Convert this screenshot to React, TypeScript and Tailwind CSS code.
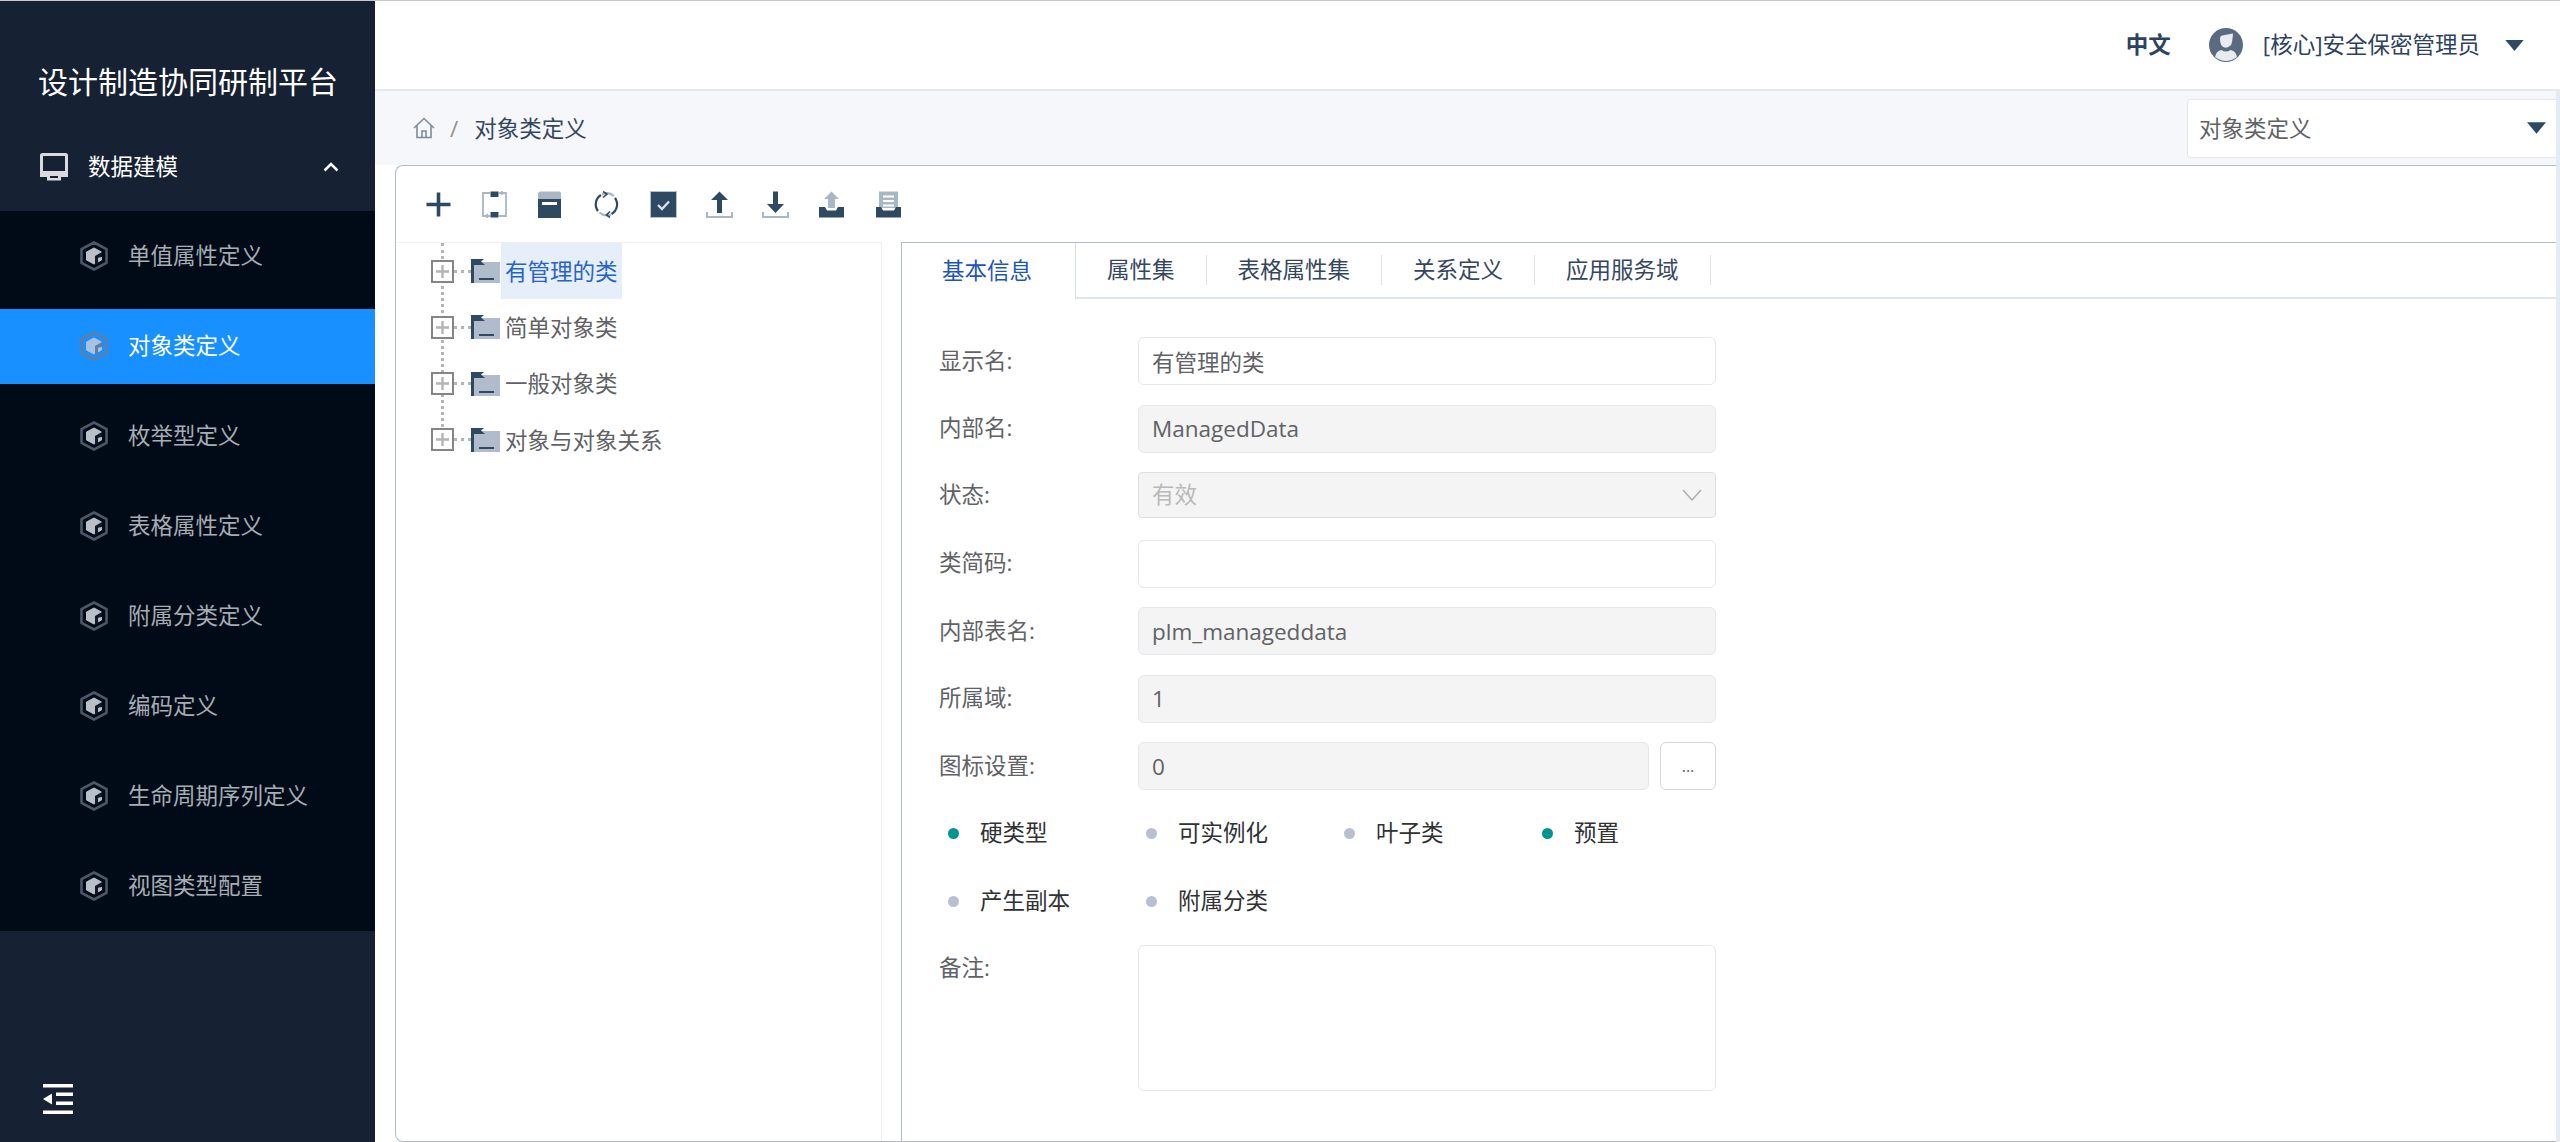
import React from "react";

const DARK = "#2d4a62";
const GRAY = "#a9b6c3";

const Hex = ({ active }: { active?: boolean }) => (
  <svg width="28" height="30" viewBox="0 0 28 30" className="shrink-0">
    <path d="M14 1.5 L26.5 8.2 V21.8 L14 28.5 L1.5 21.8 V8.2 Z" fill="none" stroke={active ? "#5f7ea3" : "#4a5868"} strokeWidth="2.6" strokeLinejoin="round" />
    <path d="M14 7 L21.5 11 V19 L14 23 L6.5 19 V11 Z" fill={active ? "#a9c2e0" : "#b9c0c8"} stroke={active ? "#a9c2e0" : "#b9c0c8"} strokeWidth="1" strokeLinejoin="round" />
    <path d="M22 11 L15 15 V24 L18 22.5 V17.5 Q18 16.5 19 16.5 L22 16 Z" fill={active ? "#5f7ea3" : "#10192a"} />
  </svg>
);

const Caret = ({ className }: { className: string }) => (
  <svg viewBox="0 0 20 12" className={className}>
    <path d="M0 0 H20 L10 12 Z" fill={DARK} />
  </svg>
);

const tools = [
  <path key="a" d="M13.5 1.5 V25.5 M1.5 13.5 H25.5" stroke={DARK} strokeWidth="3.6" fill="none" />,
  <g key="b">
    <path d="M9 2 H2 V25 H9 M18 2 H25 V25 H18" stroke={GRAY} strokeWidth="1.8" fill="none" />
    <path d="M20 0 L23 2 L20 4 M7 23 L4 25 L7 27" stroke={GRAY} strokeWidth="1.2" fill="none" />
    <rect x="9.5" y="0.5" width="8" height="5.5" fill={DARK} />
    <rect x="9.5" y="21" width="8" height="5.5" fill={DARK} />
  </g>,
  <g key="c">
    <path d="M1 3 Q1 0.5 3.5 0.5 H23 L24 2 V8 H1 Z" fill={GRAY} />
    <rect x="1" y="8" width="23" height="19" fill={DARK} />
    <rect x="5" y="11" width="15" height="3" fill="#ffffff" />
  </g>,
  <g key="d" fill="none" strokeWidth="2.2">
    <path d="M5 20 A11 11 0 0 1 8 4" stroke={DARK} />
    <path d="M9 3.5 A11 11 0 0 1 21 5" stroke={GRAY} />
    <path d="M22 7 A11 11 0 0 1 18.5 23" stroke={DARK} />
    <path d="M18 23.5 A11 11 0 0 1 6.5 21.5" stroke={GRAY} />
    <path d="M10 0.5 L14 3 L10 6.5 M17 20.5 L13.5 24 L17 26.5" stroke={DARK} strokeWidth="1.6" />
  </g>,
  <g key="e">
    <rect x="0.5" y="0.5" width="26" height="26" fill={DARK} stroke="#b4bfca" strokeWidth="1" />
    <path d="M8 14 L12 18 L19 10.5" stroke="#d9dfe5" strokeWidth="2.4" fill="none" />
  </g>,
  <g key="f">
    <path d="M1 21 V26 H26 V21" stroke={GRAY} strokeWidth="2" fill="none" />
    <path d="M13.5 0.5 L22 9 H16 V22 H11 V9 H5 Z" fill={DARK} />
  </g>,
  <g key="g">
    <path d="M1 21 V26 H26 V21" stroke={GRAY} strokeWidth="2" fill="none" />
    <path d="M13.5 22 L22 13 H16 V0.5 H11 V13 H5 Z" fill={DARK} />
  </g>,
  <g key="h">
    <path d="M13.5 0.5 L21 8 H17 V17 H10 V8 H6 Z" fill={GRAY} />
    <path d="M1 16 H7 L9 19.5 H18 L20 16 H26 V26.5 H1 Z" fill={DARK} />
  </g>,
  <g key="i">
    <path d="M4 0.5 H23 V17 H4 Z" fill={GRAY} />
    <rect x="8" y="4.5" width="11" height="2" fill="#fff" />
    <rect x="8" y="9" width="11" height="2" fill="#fff" />
    <rect x="8" y="13.5" width="11" height="2" fill="#fff" />
    <path d="M1 16 H6 L8 19.5 H19 L21 16 H26 V26.5 H1 Z" fill={DARK} />
  </g>,
];

const menu = ["单值属性定义", "对象类定义", "枚举型定义", "表格属性定义", "附属分类定义", "编码定义", "生命周期序列定义", "视图类型配置"];
const tree = ["有管理的类", "简单对象类", "一般对象类", "对象与对象关系"];
const tabs = ["属性集", "表格属性集", "关系定义", "应用服务域"];

const Label = ({ children }: { children: React.ReactNode }) => (
  <label className="block w-[199px] shrink-0 text-[#606266]">{children}</label>
);

const Field = ({ label, value, disabled }: { label: string; value: string; disabled?: boolean }) => (
  <div className="flex items-center h-[48px] mb-[19.5px]">
    <Label>{label}</Label>
    <input
      readOnly
      value={value}
      className={`w-[578px] h-[48px] px-[13px] rounded-[6px] border border-[#e4e7ed] text-[#606266] outline-none ${disabled ? "bg-[#f4f4f4]" : "bg-white"}`}
    />
  </div>
);

const Check = ({ label, on }: { label: string; on?: boolean }) => (
  <div className="flex items-center gap-[21px] h-[48px] text-[#303133]">
    <span className={`w-[11px] h-[11px] rounded-full ${on ? "bg-[#009490]" : "bg-[#b8c0d0]"}`} />
    <span>{label}</span>
  </div>
);

export default function App() {
  return (
    <div
      className="flex h-[1142px] w-full overflow-hidden border-t border-[#c8c8c8] bg-white text-[22.5px] leading-none"
      style={{ fontFamily: '"Open Sans", "Noto Sans CJK SC", sans-serif' }}
    >
      <aside className="w-[375px] shrink-0 flex flex-col bg-[#162133]">
        <div className="h-[120px] pt-[63px] pl-[38px] text-[30px] leading-[36px] text-white whitespace-nowrap">设计制造协同研制平台</div>
        <div className="h-[90px] flex items-center pl-[40px] pr-[36px] pt-[2px] text-white">
          <svg width="28" height="28" viewBox="0 0 28 28" className="mr-[20px]">
            <rect x="1.5" y="1.5" width="25" height="18" rx="1" fill="none" stroke="#d8dadd" strokeWidth="3" />
            <path d="M0 19 H28 V24 H21 V27.5 H7 V24 H0 Z" fill="#d8dadd" />
            <rect x="10" y="23" width="8" height="2" fill="#162133" />
          </svg>
          <span className="flex-1">数据建模</span>
          <svg width="16" height="10" viewBox="0 0 16 10">
            <path d="M1.5 8.5 L8 2 L14.5 8.5" fill="none" stroke="#ffffff" strokeWidth="2.6" />
          </svg>
        </div>
        <ul className="bg-[#010b17] h-[720px] flex flex-col">
          {menu.map((m, i) => (
            <li
              key={m}
              className={`h-[75px] my-[7.5px] flex items-center gap-[20px] pl-[80px] ${i === 1 ? "bg-[#1890ff] text-white" : "text-[#a6adb4]"}`}
            >
              <Hex active={i === 1} />
              <span>{m}</span>
            </li>
          ))}
        </ul>
        <div className="flex-1 flex items-end pl-[43px] pb-[28px]">
          <svg width="30" height="30" viewBox="0 0 30 30">
            <g fill="#ffffff">
              <rect x="0" y="0" width="30" height="3.5" />
              <rect x="13" y="8.5" width="17" height="3.5" />
              <rect x="13" y="17.5" width="17" height="3.5" />
              <rect x="0" y="26.5" width="30" height="3.5" />
              <path d="M0 15 L9 9.5 V20.5 Z" />
            </g>
          </svg>
        </div>
      </aside>

      <main className="flex-1 min-w-0 flex flex-col">
        <header className="h-[90px] shrink-0 border-b-2 border-[#e4e9f0] flex items-center justify-end pr-[36px] text-[#2c4260]">
          <span className="font-bold mr-[38px]">中文</span>
          <svg width="34" height="34" viewBox="0 0 34 34" className="mr-[20px]">
            <circle cx="17" cy="17" r="17" fill="#5a6b80" />
            <path d="M11 10 Q11 8 13 7.5 L24 5.5 Q23.5 14 22 17 Q17 22 13 18 Q11 16 11 10 Z" fill="#e8ebef" />
            <path d="M6 29 Q7 23 12.5 22 Q17 25 21.5 22 Q27 23 28 29 Q17 37 6 29 Z" fill="#e8ebef" />
          </svg>
          <span className="mr-[25px] whitespace-nowrap">[核心]安全保密管理员</span>
          <Caret className="w-[19px] h-[11px]" />
        </header>

        <div className="flex-1 min-h-0 flex">
          <div className="flex-1 min-w-0 flex flex-col">
            <div className="h-[74px] shrink-0 bg-[#f5f7fb] flex items-center pl-[38px]">
              <svg width="22" height="22" viewBox="0 0 22 22" fill="none" stroke="#7f8c9b" strokeWidth="1.6">
                <path d="M1 11 L11 1.5 L21 11 M4 8.5 V20.5 H18 V8.5 M9 20.5 V14 H13 V20.5" />
              </svg>
              <span className="ml-[15px] mr-[16px] text-[#9a8f86] pt-[2px]">/</span>
              <span className="text-[#35475e] pt-[2px]">对象类定义</span>
              <div className="ml-auto w-[369px] h-[59px] flex items-center justify-between bg-white border border-[#e4e7ed] border-r-0 rounded-l-[4px] pl-[11px] pr-[10px] text-[#606266]">
                <span className="pt-[2px]">对象类定义</span>
                <Caret className="w-[19px] h-[12px]" />
              </div>
            </div>

            <div className="flex-1 min-h-0 ml-[20px] flex flex-col border-t border-l border-b border-[#aebdcd] rounded-l-[8px]">
              <div className="h-[76px] shrink-0 flex items-center pl-[14px]">
                {tools.map((t, i) => (
                  <div key={i} className="w-[56.25px] flex justify-center">
                    <svg width="27" height="27" viewBox="0 0 27 27">{t}</svg>
                  </div>
                ))}
              </div>

              <div className="flex-1 min-h-0 flex">
                <div className="relative w-[486px] shrink-0 border-t border-r border-[#efefef] text-[#606266]">
                  <div className="absolute left-[45px] top-0 h-[197px] border-l-[3px] border-dotted border-[#b4b4b4]" />
                  {tree.map((t, i) => (
                    <div key={t} className="relative h-[56.25px] flex items-center pl-[35px]">
                      <span className="relative w-[23px] h-[23px] shrink-0 bg-white border-2 border-[#858585]">
                        <svg width="19" height="19" viewBox="0 0 19 19" className="block">
                          <path d="M9.5 3 V16 M3 9.5 H16" stroke="#b4b4b4" strokeWidth="2.4" />
                        </svg>
                      </span>
                      <span className="w-[17px] border-t-[3px] border-dotted border-[#b4b4b4]" />
                      <svg width="29" height="24" viewBox="0 0 29 24" className="shrink-0">
                        <rect x="0" y="3" width="29" height="21" fill="#b0bccb" />
                        <path d="M0 0 H13 L10 2.5 L14 6 H3 V24 H0 Z" fill={DARK} />
                        <rect x="8" y="19" width="15" height="2" fill={DARK} />
                      </svg>
                      <span className={`ml-[1px] h-full flex items-center px-[4px] pt-[2px] ${i === 0 ? "bg-[#e6eef9] text-[#2563c9]" : ""}`}>{t}</span>
                    </div>
                  ))}
                </div>

                <div className="flex-1 min-w-0 ml-[19px] border-t border-l border-[#aebdcd] flex flex-col">
                  <div className="h-[56px] shrink-0 flex border-b-2 border-[#dde5ef]">
                    <div className="w-[174px] h-[56px] flex items-center pl-[40px] bg-white border-r border-[#d5dfec] text-[#1d55b8]">基本信息</div>
                    {tabs.map((t) => (
                      <div key={t} className="h-full flex items-center">
                        <span className="px-[31px] text-[#35475e] whitespace-nowrap">{t}</span>
                        <span className="w-px h-[30px] bg-[#dde3ea]" />
                      </div>
                    ))}
                  </div>

                  <div className="pl-[37px] pt-[38px]">
                    <Field label="显示名:" value="有管理的类" />
                    <Field label="内部名:" value="ManagedData" disabled />
                    <div className="flex items-start h-[48px] mb-[19.5px]">
                      <div className="h-[46px] flex items-center"><Label>状态:</Label></div>
                      <div className="w-[578px] h-[46px] flex items-center justify-between pl-[13px] pr-[13px] rounded-[4px] bg-[#f4f4f4] border border-[#dcdfe6] text-[#b9b9b9]">
                        <span>有效</span>
                        <svg width="20" height="12" viewBox="0 0 20 12" fill="none" stroke="#a8abb2" strokeWidth="1.4">
                          <path d="M1 1 L10 11 L19 1" />
                        </svg>
                      </div>
                    </div>
                    <Field label="类简码:" value="" />
                    <Field label="内部表名:" value="plm_manageddata" disabled />
                    <Field label="所属域:" value="1" disabled />
                    <div className="flex items-center h-[48px] mb-[19.5px]">
                      <Label>图标设置:</Label>
                      <input readOnly value="0" className="w-[511px] h-[48px] px-[13px] rounded-[6px] border border-[#e4e7ed] bg-[#f4f4f4] text-[#606266] outline-none" />
                      <button className="ml-[11px] w-[56px] h-[48px] rounded-[6px] border border-[#d4d7de] bg-white text-[#606266] text-[16px]">...</button>
                    </div>
                    <div className="grid grid-cols-[198px_198px_198px_198px] gap-y-[19.5px] pl-[9px] mb-[19.5px]">
                      <Check label="硬类型" on />
                      <Check label="可实例化" />
                      <Check label="叶子类" />
                      <Check label="预置" on />
                      <Check label="产生副本" />
                      <Check label="附属分类" />
                    </div>
                    <div className="flex items-start">
                      <div className="pt-[12px] shrink-0"><Label>备注:</Label></div>
                      <textarea readOnly className="w-[578px] h-[146px] rounded-[6px] border border-[#e4e7ed] resize-none outline-none" />
                    </div>
                  </div>
                </div>
              </div>
            </div>
          </div>
          <div className="w-[4px] shrink-0 bg-[#e5ebf2]" />
        </div>
      </main>
    </div>
  );
}
